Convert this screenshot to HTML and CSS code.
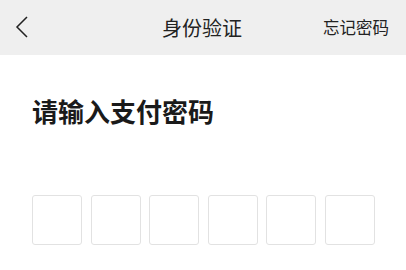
FILE: index.html
```html
<!DOCTYPE html>
<html lang="zh-CN">
<head>
<meta charset="utf-8">
<link rel="stylesheet" href="styles.css">
</head>
<body>
<header class="nav">
  <div class="nav-left">
    <svg class="back" width="14" height="22" viewBox="0 0 14 22"><path d="M12 1 L2 11 L12 21" fill="none" stroke="#222" stroke-width="1.5"/></svg>
  </div>
  <div class="nav-title">身份验证</div>
  <div class="nav-right">忘记密码</div>
</header>
<main class="content">
  <h1 class="heading">请输入支付密码</h1>
  <div class="pin">
    <div class="cell"></div>
    <div class="cell"></div>
    <div class="cell"></div>
    <div class="cell"></div>
    <div class="cell"></div>
    <div class="cell"></div>
  </div>
</main>
</body>
</html>
```
FILE: styles.css
```css
html, body {
  margin: 0;
  padding: 0;
  background: #fff;
  font-family: "Noto Sans CJK SC", "Noto Sans", sans-serif;
  color: #222;
}
.nav {
  height: 55px;
  background: #efefef;
  display: grid;
  grid-template-columns: 1fr auto 1fr;
  align-items: center;
  padding: 0 17px 0 15px;
}
.nav-left {
  display: flex;
  align-items: center;
}
.back {
  display: block;
  margin-top: -1px;
}
.nav-title {
  font-size: 20px;
  line-height: 1;
  color: #222;
}
.nav-right {
  justify-self: end;
  font-size: 16.5px;
  line-height: 1;
  color: #222;
}
.content {
  padding: 0 31px 0 32px;
}
.heading {
  margin: 0;
  padding-top: 41px;
  font-size: 26px;
  line-height: 30px;
  font-weight: 700;
  color: #1a1a1a;
}
.pin {
  margin-top: 69px;
  display: flex;
  gap: 8.6px;
}
.cell {
  width: 50px;
  height: 50px;
  box-sizing: border-box;
  border: 1.5px solid #e2e2e2;
  border-radius: 3px;
}
```
